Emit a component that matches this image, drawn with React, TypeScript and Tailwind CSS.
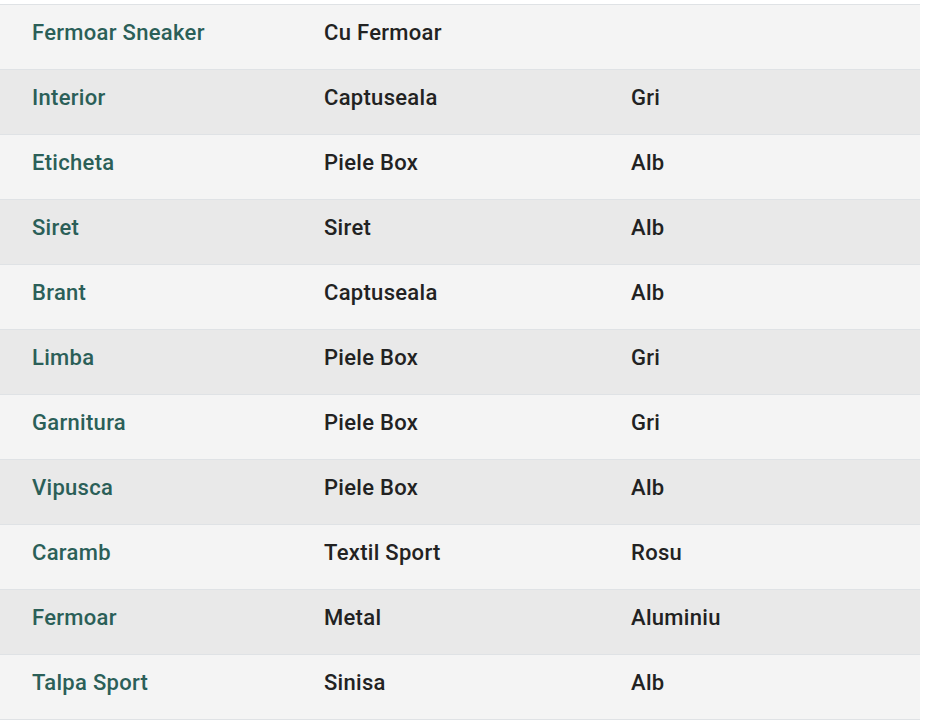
const ROWS: [string, string, string][] = [
  ['Fermoar Sneaker', 'Cu Fermoar', ''],
  ['Interior', 'Captuseala', 'Gri'],
  ['Eticheta', 'Piele Box', 'Alb'],
  ['Siret', 'Siret', 'Alb'],
  ['Brant', 'Captuseala', 'Alb'],
  ['Limba', 'Piele Box', 'Gri'],
  ['Garnitura', 'Piele Box', 'Gri'],
  ['Vipusca', 'Piele Box', 'Alb'],
  ['Caramb', 'Textil Sport', 'Rosu'],
  ['Fermoar', 'Metal', 'Aluminiu'],
  ['Talpa Sport', 'Sinisa', 'Alb'],
]

export default function App() {
  return (
    <div className="min-h-[720px] bg-white pt-1" style={{ fontFamily: 'Roboto, "Liberation Sans", sans-serif' }}>
      <div className="w-[920px] border-t border-[#dfe2e5]">
        {ROWS.map(([part, material, color], i) => (
          <div
            key={i}
            className={`grid h-[65px] items-start pt-[15px] border-b border-[#dfe2e5] text-[22px] leading-[26px] tracking-[0.3px] font-medium ${i % 2 === 0 ? 'bg-[#f4f4f4]' : 'bg-[#e9e9e9]'}`}
            style={{ gridTemplateColumns: '292px 307px 1fr' }}
          >
            <span className="pl-8 text-[#2b5f58]">{part}</span>
            <span className="pl-8 text-[#222]">{material}</span>
            <span className="pl-8 text-[#222]">{color}</span>
          </div>
        ))}
      </div>
    </div>
  )
}
